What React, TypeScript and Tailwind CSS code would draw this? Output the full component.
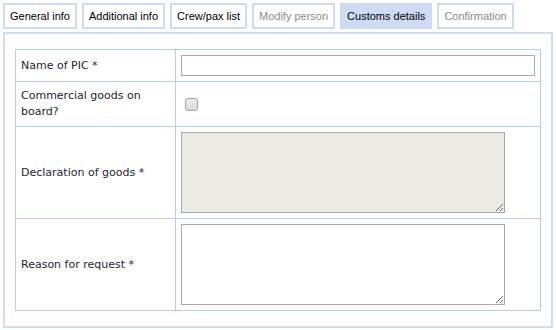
import { useState } from "react";

type Tab = {
  label: string;
  state: "normal" | "active" | "disabled";
};

const tabs: Tab[] = [
  { label: "General info", state: "normal" },
  { label: "Additional info", state: "normal" },
  { label: "Crew/pax list", state: "normal" },
  { label: "Modify person", state: "disabled" },
  { label: "Customs details", state: "active" },
  { label: "Confirmation", state: "disabled" },
];

export default function App() {
  const [picName, setPicName] = useState("");
  const [commercial, setCommercial] = useState(false);
  const [reason, setReason] = useState("");

  return (
    <div className="min-h-[330px] bg-white p-[3px] font-['Liberation_Sans',Arial,sans-serif]">
      {/* Tabs */}
      <div className="flex gap-[5px]">
        {tabs.map((tab) => (
          <div
            key={tab.label}
            className={
              "flex h-[26px] items-center border-2 px-[5px] text-[11px] " +
              (tab.state === "active"
                ? "border-[#cddcf4] bg-[#cddcf4] text-black"
                : tab.state === "disabled"
                ? "border-[#cddcf4] bg-white text-[#8a8a8a]"
                : "border-[#cddcf4] bg-white text-black")
            }
          >
            {tab.label}
          </div>
        ))}
      </div>

      {/* Panel */}
      <div className="mt-[3px] border-2 border-[#cddcf4] px-[10px] pb-[15px] pt-[15px]">
        <table className="w-full border-collapse font-['DejaVu_Sans',Verdana,sans-serif] text-[11px] leading-[16px] text-[#1e2433]">
          <tbody>
            <tr className="h-[32px]">
              <td className="w-[160px] border border-[#b5cdf3] px-[5px] align-middle">
                Name of PIC *
              </td>
              <td className="border border-[#b5cdf3] px-[5px] align-middle">
                <input
                  type="text"
                  value={picName}
                  onChange={(e) => setPicName(e.target.value)}
                  className="block h-[21px] w-full border border-[#a9a9a9] bg-white px-1 outline-none"
                />
              </td>
            </tr>
            <tr className="h-[45px]">
              <td className="border border-[#b5cdf3] px-[5px] align-middle">
                Commercial goods on board?
              </td>
              <td className="border border-[#b5cdf3] px-[5px] align-middle">
                <input
                  type="checkbox"
                  checked={commercial}
                  onChange={(e) => setCommercial(e.target.checked)}
                  className="ml-[4px] block h-[13px] w-[13px] appearance-none rounded-[3px] border border-[#a3a3a0] bg-gradient-to-b from-[#ececea] to-[#d9d9d5]"
                />
              </td>
            </tr>
            <tr className="h-[92px]">
              <td className="border border-[#b5cdf3] px-[5px] align-middle">
                Declaration of goods *
              </td>
              <td className="border border-[#b5cdf3] px-[5px] align-middle">
                <textarea
                  disabled
                  className="block h-[81px] w-[324px] border border-[#a9a9a9] bg-[#ebebe4] outline-none"
                />
              </td>
            </tr>
            <tr className="h-[92px]">
              <td className="border border-[#b5cdf3] px-[5px] align-middle">
                Reason for request *
              </td>
              <td className="border border-[#b5cdf3] px-[5px] align-middle">
                <textarea
                  value={reason}
                  onChange={(e) => setReason(e.target.value)}
                  className="block h-[81px] w-[324px] border border-[#a9a9a9] bg-white outline-none"
                />
              </td>
            </tr>
          </tbody>
        </table>
      </div>
    </div>
  );
}
